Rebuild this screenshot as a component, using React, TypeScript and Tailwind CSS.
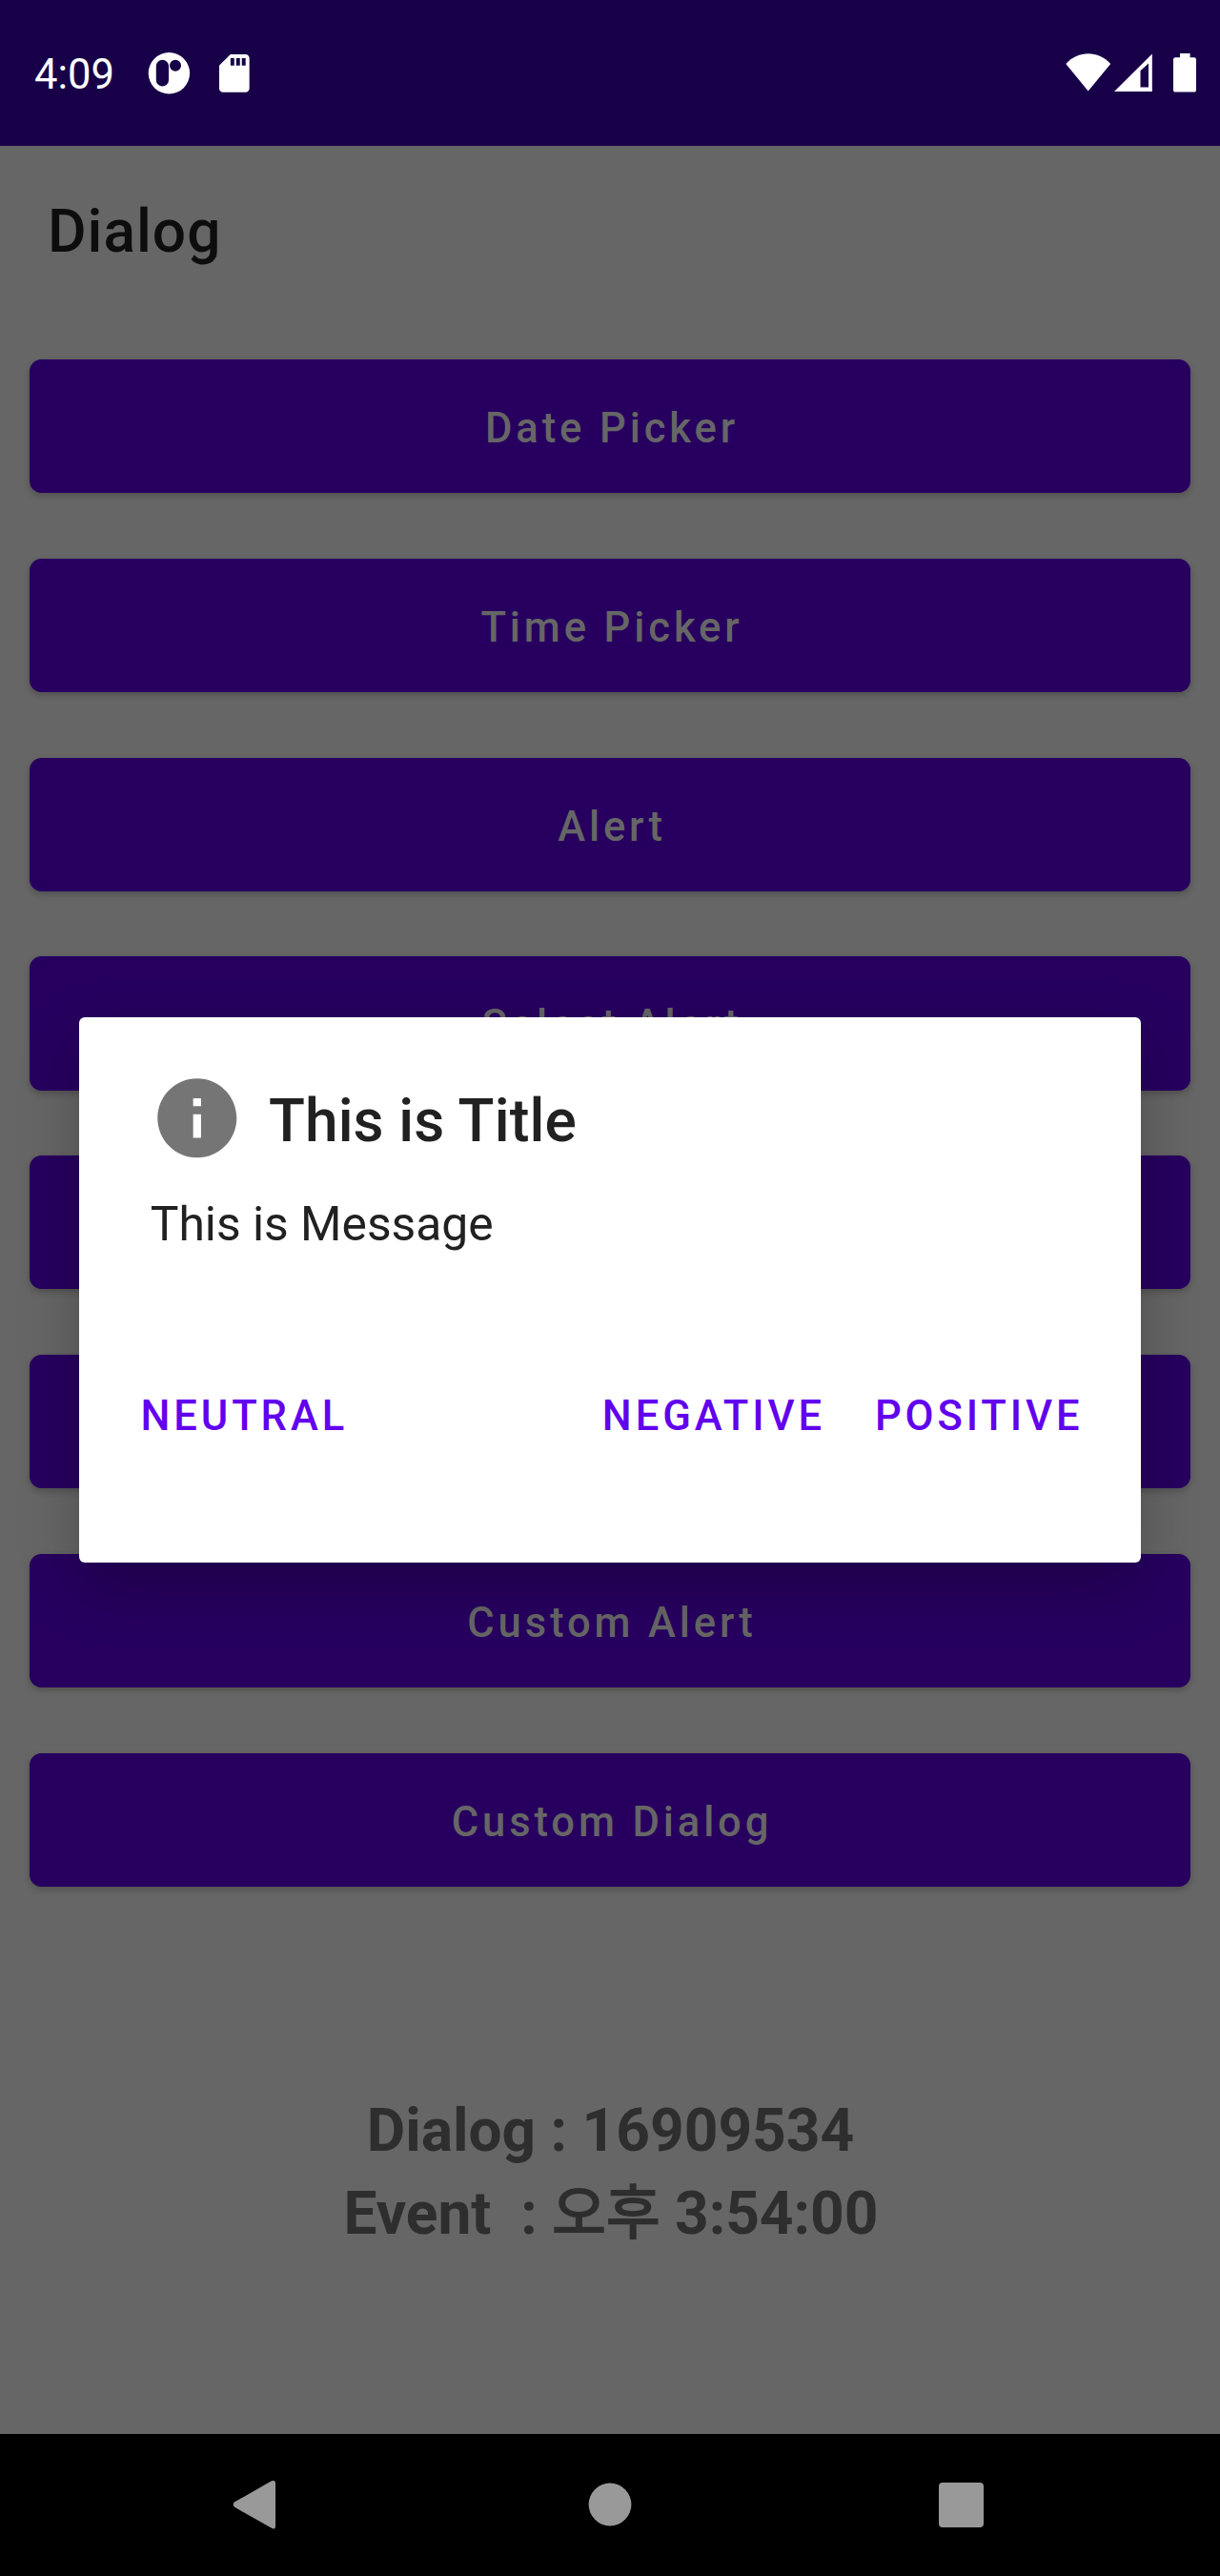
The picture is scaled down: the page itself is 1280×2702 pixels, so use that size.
// The fifth and sixth entries sit fully behind the dialog and carry no label.
const actions = ['Date Picker', 'Time Picker', 'Alert', 'Select Alert', '', '', 'Custom Alert', 'Custom Dialog'];

function StatusBar() {
  return (
    <header className="flex h-[153px] shrink-0 items-start bg-[#180048] pl-[35px] pr-[25px] text-white">
      <span className="mt-[53px] w-[119px] whitespace-nowrap pl-px text-[43.56px] leading-[52px]">4:09</span>
      <svg className="mt-[54px] h-[46px] w-[46px] shrink-0" viewBox="154 54 46 46">
        <path
          fill="currentColor"
          fillRule="evenodd"
          d="M177.4 55.1a21.7 21.7 0 1 0 0 43.4a21.7 21.7 0 1 0 0-43.4zM170.4 62.7a6.6 6.6 0 0 1 6.6 6.6v14.6a6.6 6.6 0 0 1-13.2 0V69.3a6.6 6.6 0 0 1 6.6-6.6zM184 62.7a6 6 0 1 1 0 12a6 6 0 1 1 0-12z"
        />
      </svg>
      <svg className="ml-[22px] mt-[53px] h-[47.6px] w-[47.6px] shrink-0" viewBox="0 0 24 24">
        <path
          fill="currentColor"
          d="M18 2h-8L4.02 8 4 20c0 1.1.9 2 2 2h12c1.1 0 2-.9 2-2V4c0-1.1-.9-2-2-2zm-6 6h-2V4h2v4zm3 0h-2V4h2v4zm3 0h-2V4h2v4z"
        />
      </svg>
      <div className="ml-auto flex pt-14">
        <svg className="h-10 w-12" viewBox="1118 56 48 40">
          <path fill="currentColor" d="M1118.3 67C1131 52.5 1152.5 52.5 1165.2 67L1141.7 95.4z" />
        </svg>
        <svg className="ml-[3px] h-[41px] w-10" viewBox="1169 56 40 41">
          <path
            fill="currentColor"
            fillRule="evenodd"
            d="M1169 96L1208.8 56.4V96zM1196.5 74.3V91.5H1205V66.4z"
          />
        </svg>
        <svg className="ml-[22px] h-[41px] w-6" viewBox="1231 56 24 41">
          <path
            fill="currentColor"
            d="M1238 56h10.6v4.2h4.2a2.2 2.2 0 0 1 2.2 2.2v32a2.2 2.2 0 0 1-2.2 2.2h-19.6a2.2 2.2 0 0 1-2.2-2.2v-32a2.2 2.2 0 0 1 2.2-2.2h4.8z"
          />
        </svg>
      </div>
    </header>
  );
}

function AlertDialog() {
  return (
    <section
      role="dialog"
      className="absolute left-[83px] top-[1066.5px] flex h-[572.5px] w-[1114px] flex-col rounded-[6px] bg-white text-[#212121] shadow-[0_24px_64px_rgba(0,0,0,0.24)]"
    >
      <div className="flex items-center pl-[74.3px] pt-[56px]">
        <svg className="h-[99.6px] w-[99.6px] text-[#757575]" viewBox="0 0 24 24">
          <path
            fill="currentColor"
            d="M12 2C6.48 2 2 6.48 2 12s4.48 10 10 10 10-4.48 10-10S17.52 2 12 2zm1 15h-2v-6h2v6zm0-8h-2V7h2v2z"
          />
        </svg>
        <h2 className="ml-[25px] mt-[8px] text-[62.22px] font-medium leading-[74px] tracking-[0.002em]">
          This is Title
        </h2>
      </div>
      <p className="mt-[32px] pl-[74.7px] text-[49.78px] leading-[60px]">This is Message</p>
      <div className="mt-[144px] flex pl-[64.5px] pr-[60.5px] text-[43.56px] font-medium leading-[56px] tracking-[0.0893em] text-[#6200ee]">
        <button>NEUTRAL</button>
        <button className="ml-auto">NEGATIVE</button>
        <button className="ml-[52px]">POSITIVE</button>
      </div>
    </section>
  );
}

function NavigationBar() {
  return (
    <nav className="flex h-[149px] shrink-0 items-start justify-between bg-black pl-[244px] pr-[248px] pt-[49px] text-[#999999]">
      <svg className="h-[51px] w-[46px]" viewBox="244 2602 46 51">
        <path
          fill="currentColor"
          d="M245.8 2624.6L284.5 2602.6Q289 2600.5 289 2605V2649.5Q289 2654 284.5 2651.6L245.8 2629.6Q243.6 2627 245.8 2624.6z"
        />
      </svg>
      <svg className="ml-[5px] mt-[2px] h-[46px] w-[46px]" viewBox="0 0 46 46">
        <circle cx="23" cy="23" r="22.4" fill="currentColor" />
      </svg>
      <div className="mt-[2px] h-[47px] w-[47px] rounded-[4px] bg-[#999999]" />
    </nav>
  );
}

export default function App() {
  return (
    <div className="relative flex h-[2702px] w-[1280px] flex-col overflow-hidden bg-[#666666] font-['Roboto','Noto_Sans_CJK_KR',sans-serif]">
      <StatusBar />
      <h1 className="ml-[50px] mt-[49px] text-[62.22px] font-medium leading-[82px] tracking-[0.016em] text-[#0d0d0d]">
        Dialog
      </h1>
      <main className="mt-[93px] flex flex-col gap-[68.5px] px-[31px]">
        {actions.map((label, index) => (
          <button
            key={index}
            className="h-[140.3px] w-full rounded-[12.4px] bg-[#27005f] pl-[4px] pt-[5px] text-[43.56px] font-medium tracking-[0.0893em] text-[#666666] shadow-[0_3px_7px_rgba(0,0,0,0.22)]"
          >
            {label}
          </button>
        ))}
      </main>
      <div className="mt-[212px] whitespace-pre text-center text-[62.22px] font-bold leading-[87px] text-[#2e2e2e]">
        <p className="pl-px">Dialog : 16909534</p>
        <p className="pl-[2px]">
          {'Event  : '}
          <span className="text-[61.5px] font-normal leading-none [-webkit-text-stroke:2px_#2e2e2e]">오후</span>
          {' 3:54:00'}
        </p>
      </div>
      <div className="mt-auto">
        <NavigationBar />
      </div>
      <AlertDialog />
    </div>
  );
}
